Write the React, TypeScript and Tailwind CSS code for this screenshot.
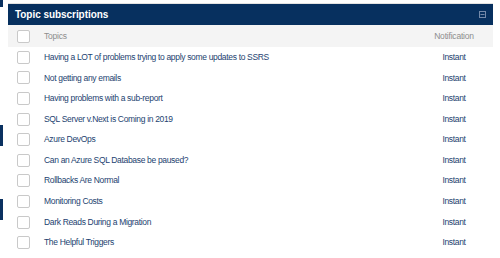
const TOPICS = [
  'Having a LOT of problems trying to apply some updates to SSRS',
  'Not getting any emails',
  'Having problems with a sub-report',
  'SQL Server v.Next is Coming in 2019',
  'Azure DevOps',
  'Can an Azure SQL Database be paused?',
  'Rollbacks Are Normal',
  'Monitoring Costs',
  'Dark Reads During a Migration',
  'The Helpful Triggers',
]

function Box() {
  return <span className="block w-[13px] h-[13px] rounded-[2px] border border-[#c9c9c9] bg-white" />
}

export default function App() {
  return (
    <div className="relative w-[500px] h-[258px] bg-white overflow-hidden font-['Liberation_Sans',Arial,sans-serif]">
      {/* Streifen vom Hintergrund */}
      <div className="absolute left-0 top-0 w-[3px] h-[7px] bg-[#0a3160]" />
      <div className="absolute left-0 top-[125px] w-[3px] h-[21px] bg-[#0a3160]" />
      <div className="absolute left-0 top-[199px] w-[3px] h-[21px] bg-[#0a3160]" />

      <div className="pt-[3px] pl-[8px] w-[493px]">
        <div className="border-t border-[#e3e3e3]">
          {/* Kopf */}
          <div className="flex items-center justify-between h-[21px] bg-[#07305f] pl-[7px] pr-[7px]">
            <span className="text-white font-bold text-[10px] tracking-[-0.05px]">Topic subscriptions</span>
            <svg width="7" height="7" viewBox="0 0 7 7" className="text-[#7489a9]">
              <rect x="0.5" y="0.5" width="6" height="6" fill="none" stroke="currentColor" strokeWidth="1" />
              <line x1="1.5" y1="3.5" x2="5.5" y2="3.5" stroke="currentColor" strokeWidth="1" />
            </svg>
          </div>

          {/* Spalten */}
          <div className="flex items-center h-[22px] bg-[#f4f4f4] text-[8.5px] tracking-[-0.2px] text-[#8d8d8d]">
            <div className="w-[36px] pl-[9px]">
              <Box />
            </div>
            <div className="flex-1">Topics</div>
            <div className="w-[62px] mr-[8px] text-center">Notification</div>
          </div>

          {/* Zeilen */}
          {TOPICS.map((t, i) => (
            <div key={i} className="flex items-center h-[20.6px] text-[8.5px] tracking-[-0.33px] text-[#1d3f70]">
              <div className="w-[36px] pl-[9px]">
                <Box />
              </div>
              <div className="flex-1">{t}</div>
              <div className="w-[62px] mr-[8px] text-center">Instant</div>
            </div>
          ))}
        </div>
      </div>
    </div>
  )
}
